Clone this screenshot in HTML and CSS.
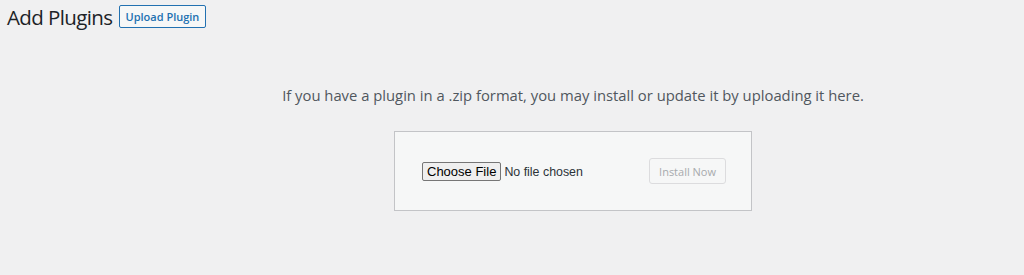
FILE: index.html
```html
<!DOCTYPE html>
<html lang="en">
  <head>
    <meta charset="UTF-8" />
    <title>Add Plugins</title>
    <link rel="stylesheet" href="styles.css">
  </head>
  <body>
    <div class="wrap">
      <div class="page-head">
        <h1>Add Plugins</h1>
        <a href="#" class="page-title-action">Upload Plugin</a>
      </div>

      <div class="upload-plugin">
        <p class="install-help">
          If you have a plugin in a .zip format, you may install or update it by uploading it here.
        </p>
        <form class="upload-form">
          <input type="file" id="pluginzip" name="pluginzip" />
          <button type="submit" class="button" disabled>Install Now</button>
        </form>
      </div>
    </div>
  </body>
</html>
```

FILE: styles.css
```css
body {
  margin: 0;
  background: #f0f0f1;
  color: #3c434a;
  font-family: "Open Sans", sans-serif;
}

.wrap {
  padding: 0 0 0 7px;
}

.page-head {
  display: flex;
  align-items: center;
  gap: 6px;
  height: 33px;
}

h1 {
  margin: 0;
  font-size: 20.5px;
  font-weight: 400;
  letter-spacing: -0.6px;
  color: #1d2327;
}

.page-title-action {
  display: inline-block;
  padding: 3px 6px;
  border: 1px solid #2271b1;
  border-radius: 2px;
  background: #f6f7f7;
  color: #2271b1;
  font-size: 11px;
  font-weight: 600;
  text-decoration: none;
}

.upload-plugin {
  display: flex;
  flex-direction: column;
  align-items: center;
  padding-left: 115px;
}

.install-help {
  margin: 52px 0 26px;
  font-size: 14.8px;
  color: #50575e;
}

.upload-form {
  display: flex;
  align-items: center;
  justify-content: space-between;
  width: 304px;
  height: 78px;
  padding: 0 25px 0 27px;
  border: 1px solid #c3c4c7;
  background: #f6f7f7;
}

input[type="file"] {
  width: 200px;
  font-family: "Liberation Sans", sans-serif;
  font-size: 12.4px;
  color: #2c3338;
}

input[type="file"]::file-selector-button {
  font-family: "Liberation Sans", sans-serif;
  font-size: 13px;
  padding: 1px 4px;
  margin-right: 3px;
  border: 1px solid #767676;
  border-radius: 2px;
  background: #efefef;
  color: #000;
}

.button {
  height: 26px;
  padding: 0 9px;
  border: 1px solid #dcdcde;
  border-radius: 3px;
  background: #f6f7f7;
  color: #a7aaad;
  font-family: "Open Sans", sans-serif;
  font-size: 11px;
  white-space: nowrap;
}
```
